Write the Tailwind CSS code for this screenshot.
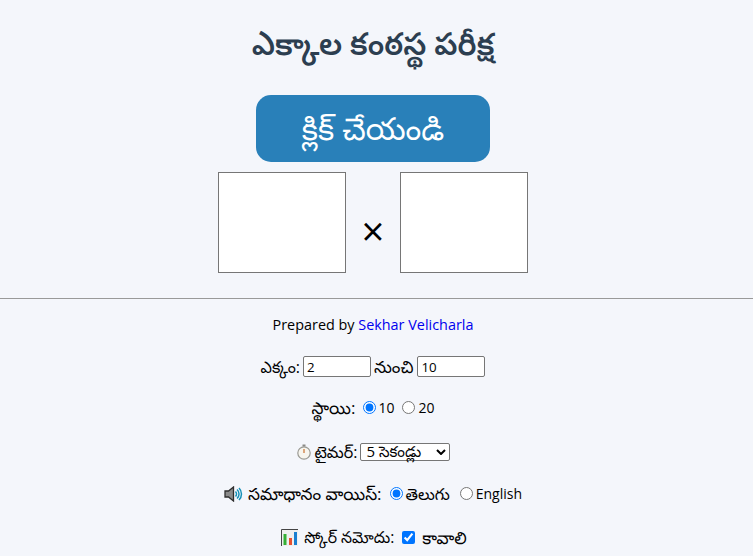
<!doctype html>
<html lang="te">
  <head>
    <meta charset="utf-8">
    <meta name="viewport" content="width=device-width, initial-scale=1">
    <script src="https://cdn.jsdelivr.net/npm/@tailwindcss/browser@4"></script>
    <title>ఎక్కాల కంఠస్థ పరీక్ష</title>
  </head>
  <body class="h-[556px] overflow-hidden bg-[#f4f6fb] text-center text-[16px] text-black font-['Open_Sans','Noto_Sans','Noto_Sans_Telugu',sans-serif]">
    <div class="w-[746px]">
      <h1 class="pt-[18px] h-[95px] text-[31px] leading-[50px] font-semibold text-[#2c3e50]">ఎక్కాల కంఠస్థ పరీక్ష</h1>

      <button class="block mx-auto w-[234px] h-[67px] rounded-[15px] bg-[#2980b9] text-[31px] text-white">క్లిక్ చేయండి</button>

      <div class="flex justify-center gap-[14px] mt-[10px]">
        <div class="w-[128px] h-[101px] bg-white border border-[#767676]"></div>
        <span class="w-[26px] h-[101px] pt-[16px] flex items-center justify-center text-[40px]">×</span>
        <div class="w-[128px] h-[101px] bg-white border border-[#767676]"></div>
      </div>
    </div>

    <hr class="mt-[25px] border-t border-[#999]">

    <div class="w-[746px]">
      <p class="mt-[16px] h-[20px] leading-[20px] text-[14.4px]">Prepared by <a href="#" class="text-[#0000ee]">Sekhar Velicharla</a></p>

      <div class="mt-[21px] flex justify-center items-center gap-[3px] h-[21px]">
        <span>ఎక్కం:</span>
        <input type="text" value="2" class="w-[68px] h-[21px] bg-white border border-[#767676] rounded-[2px] px-[3px] text-[13.3px]">
        <span class="mr-[1px] text-[17px]">నుంచి</span>
        <input type="text" value="10" class="w-[68px] h-[21px] bg-white border border-[#767676] rounded-[2px] px-[3px] text-[13.3px]">
      </div>

      <div class="mt-[20px] flex justify-center items-center h-[21px]">
        <span class="mr-[8px] text-[17px]">స్థాయి:</span>
        <input type="radio" name="level" checked class="w-[13px] h-[13px] accent-[#0075ff] mr-[2px]">
        <span class="mr-[8px] text-[14px]">10</span>
        <input type="radio" name="level" class="w-[13px] h-[13px] mr-[3px]">
        <span class="text-[14px]">20</span>
      </div>

      <div class="mt-[23px] flex justify-center items-center gap-[3px] h-[21px]">
        <svg class="w-[16px] h-[16px]" viewBox="0 0 16 16"><circle cx="8" cy="9" r="6.2" fill="#f7f5ee" stroke="#9a9a94" stroke-width="1.2"/><rect x="6.5" y="0.5" width="3" height="2" fill="#8a8a86"/><path d="M8 5v4" stroke="#c9702e" stroke-width="1.2"/></svg>
        <span>టైమర్:</span>
        <div class="w-[90px] h-[18px] flex items-center justify-between bg-white border border-[#767676] rounded-[2px] text-[15px] leading-[16px] pl-[5px] pr-[3px]">
          <span class="relative top-[-1px]">5 సెకండ్లు</span>
          <svg class="w-[10px] h-[6px]" viewBox="0 0 10 6"><path d="M1 1l4 4 4-4" fill="none" stroke="#000" stroke-width="2"/></svg>
        </div>
      </div>

      <div class="mt-[21px] flex justify-center items-center h-[21px]">
        <svg class="w-[19px] h-[16px] mr-[5px]" viewBox="0 0 19 16"><path d="M1 5h3.500l5-4v14l-5-4H1z" fill="#8a8a8a" stroke="#2e2e2e" stroke-width="1.300"/><path d="M11.500 5.500a3.500 3.500 0 0 1 0 5M13 3.500a6 6 0 0 1 0 9M15 2a8.500 8.500 0 0 1 0 12" fill="none" stroke="#1590b8" stroke-width="1.500"/></svg>
        <span class="mr-[8px] text-[17px]">సమాధానం వాయిస్:</span>
        <input type="radio" name="voice" checked class="w-[13px] h-[13px] accent-[#0075ff] mr-[3px]">
        <span class="mr-[10px]">తెలుగు</span>
        <input type="radio" name="voice" class="w-[13px] h-[13px] mr-[3px]">
        <span class="text-[14px]">English</span>
      </div>

      <div class="mt-[23px] pl-[2px] flex justify-center items-center h-[21px]">
        <svg class="w-[17px] h-[17px] mr-[6px]" viewBox="0 0 17 17"><rect width="17" height="17" fill="#efefef"/><path d="M0.500 17V0.500H17" fill="none" stroke="#444"/><rect x="2.500" y="5" width="3" height="11" fill="#35b035"/><rect x="8" y="9" width="3" height="7" fill="#e8502f"/><rect x="13" y="3" width="3" height="13" fill="#1a7fd0"/></svg>
        <span class="mr-[8px] text-[15.7px]">స్కోర్ నమోదు:</span>
        <input type="checkbox" checked class="w-[13px] h-[13px] accent-[#0075ff] mr-[7px]">
        <span class="text-[17px]">కావాలి</span>
      </div>
    </div>
  </body>
</html>
